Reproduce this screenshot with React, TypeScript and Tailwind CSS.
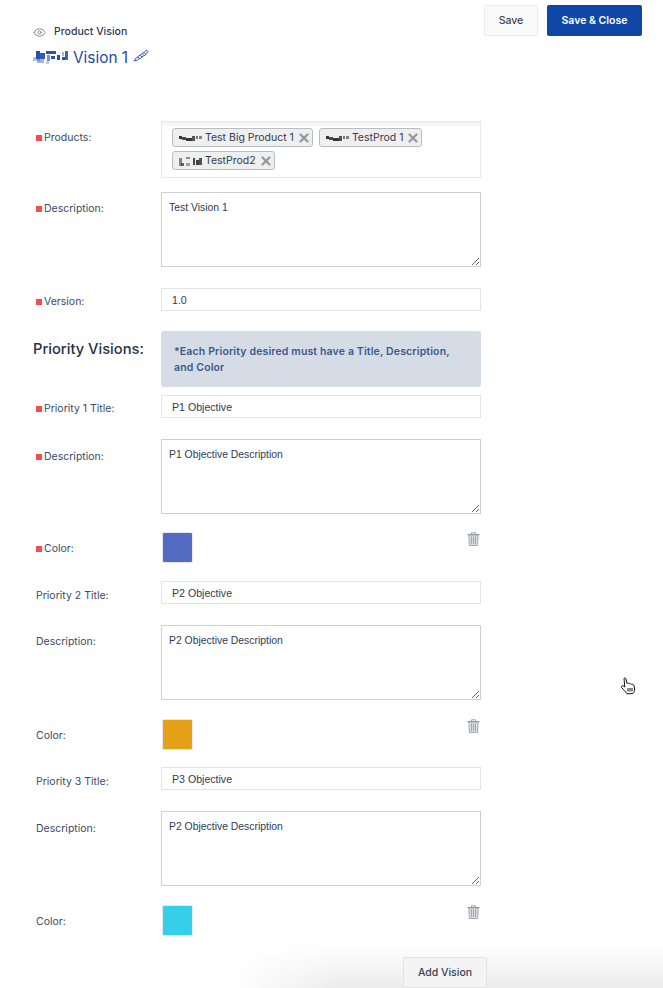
import React from "react";
import { Eye, X } from "lucide-react";

const Blocks = ({ cells, w, h, color, className }: { cells: number[][]; w: number; h: number; color: string; className?: string }) => (
  <svg width={w} height={h} viewBox={`0 0 ${w} ${h}`} className={className}>
    {cells.map(([x, y, cw, ch, o], i) => (
      <rect key={i} x={x} y={y} width={cw} height={ch} fill={color} opacity={o ?? 1} />
    ))}
  </svg>
);

const chipA = [[1,3,3,3,0.95],[4,4,4,3,0.85],[8,5,6,3,0.95],[14,3,3,5,0.8],[18,3,2,3,0.6],[21,3,3,3,0.55]];
const chipB = [[1,2,3,8,0.55],[3,7,3,3,0.7],[8,1,4,2,0.5],[8,7,4,3,0.4],[15,2,2,7,0.85],[18,4,3,5,0.9],[21,2,3,7,0.8]];
const titleBlocks = [
  [3,0,4,8,0.95],[7,2,5,6,0.9],[0,6,7,4,0.35],[4,8,7,4,0.4],[13,0,10,3,0.95],[14,4,3,6,0.6],[18,5,4,3,0.95],[13,10,3,3,0.3],
  [24,4,3,5,0.95],[29,6,3,3,0.95],[32,0,3,9,0.85],[29,1,2,4,0.4],
];

const Chip = ({ cells, label }: { cells: number[][]; label: string }) => (
  <span className="flex h-[19px] items-center rounded-[3px] border border-[#b9bcc2] bg-[#efefef] pl-[5px] pr-[1px] text-[10.5px] text-[#343b4d]">
    <Blocks cells={cells} w={24} h={10} color="#2a2a2e" className="mr-[3px]" />
    <span>{label}</span>
    <X size={14} strokeWidth={4} className="ml-[3px] text-[#97999e]" />
  </span>
);

const Label = ({ text, req, className = "" }: { text: string; req?: boolean; className?: string }) => (
  <div className={`flex w-[161px] shrink-0 items-center self-start pl-[36px] text-[10.5px] leading-[14px] text-[#3d4963] ${className}`}>
    {req && <span className="mr-[2px] h-[6px] w-[6px] bg-[#f54b4e]" />}
    <span>{text}</span>
  </div>
);

const TextInput = ({ value }: { value: string }) => (
  <input
    readOnly
    value={value}
    className="h-[23px] w-[320px] border border-[#e3e4e7] bg-white px-[10px] font-['Liberation_Sans',sans-serif] text-[10.6px] text-[#2f3a52] outline-none"
  />
);

const Area = ({ value }: { value: string }) => (
  <textarea
    readOnly
    defaultValue={value}
    className="block h-[75px] w-[320px] resize-y border border-[#cfd0d3] bg-white px-[7px] pb-[6px] pt-[8px] font-['Liberation_Sans',sans-serif] text-[10.4px] leading-[14px] text-[#2f3a52] outline-none"
  />
);

const Bin = () => (
  <svg width="13" height="14" viewBox="0 0 13 14" className="mr-[1px]" fill="none">
    <path d="M0.5 2.5 H12.5" stroke="#8f96a3" strokeWidth="1" />
    <path d="M4.5 2.2 V0.8 H8.5 V2.2" stroke="#8f96a3" strokeWidth="0.9" />
    <path d="M1.8 3 H11.2 L10.6 13.5 H2.4 Z" fill="#d9dce1" stroke="#9aa1ad" strokeWidth="0.9" />
    <path d="M4.5 4.5 V12 M6.5 4.5 V12 M8.5 4.5 V12" stroke="#9aa1ad" strokeWidth="0.9" />
  </svg>
);

const ColorRow = ({ color, req, className }: { color: string; req?: boolean; className: string }) => (
  <div className={`flex ${className}`}>
    <Label text="Color:" req={req} className="h-[33px]" />
    <div className="flex w-[320px] justify-between">
      <div className="ml-[1px] h-[31px] w-[31px] rounded-[2px] border border-[#e4e7f2]" style={{ backgroundColor: color }} />
      <Bin />
    </div>
  </div>
);

export default function App() {
  return (
    <div className="relative h-[988px] w-[663px] overflow-hidden bg-white font-['Inter',sans-serif]">
      <div className="pointer-events-none absolute bottom-0 left-[230px] right-0 h-[44px] bg-gradient-to-b from-white to-[#ececed] [mask-image:linear-gradient(to_right,transparent,black_25%)]" />

      <div className="relative flex justify-between pl-[33px] pr-[21px] pt-[5px]">
        <div className="pt-[20px]">
          <div className="flex h-[14px] items-center gap-[8px] text-[10.5px] font-medium text-[#2f3a52]">
            <Eye size={13} strokeWidth={1.5} className="text-[#6f7583]" />
            <span>Product Vision</span>
          </div>
          <div className="mt-[8px] flex h-[22px] items-center text-[15.4px] text-[#1b4ba5]">
            <Blocks cells={titleBlocks} w={35} h={14} color="#1b4ba5" className="mr-[5px] blur-[0.3px]" />
            <span>Vision 1</span>
            <svg width="16" height="13" viewBox="0 0 16 13" className="ml-[5px] mt-[-5px]" fill="none" stroke="#1b4ba5">
              <path d="M1 12 L3 9 L11 3.2 L13 5.4 L4.5 11 Z" strokeWidth="0.9" />
              <path d="M5 8 L6.5 9.8 M7.5 6.2 L9 8 M9.5 4.8 L11 6.5" strokeWidth="1" />
              <path d="M11.5 2.6 L13.6 1.2 L15 2.6 L13.4 4.6" strokeWidth="1" />
            </svg>
          </div>
        </div>
        <div className="flex gap-[9px]">
          <button className="h-[31px] w-[54px] rounded-[2px] border border-[#ececee] bg-[#fafafa] text-[10.5px] font-medium text-[#3a4256]">Save</button>
          <button className="h-[31px] w-[95px] rounded-[2px] bg-[#0f47a6] text-[10.5px] font-semibold text-white">Save &amp; Close</button>
        </div>
      </div>

      <div className="relative mt-[52px] flex">
        <Label text="Products:" req className="h-[34px]" />
        <div className="h-[57px] w-[320px] border border-[#e8e9eb] bg-gradient-to-b from-[#f1f1f2] from-0% to-white to-[10%] pl-[10px] pt-[6px]">
          <div className="flex flex-wrap gap-x-[6px] gap-y-[4px]">
            <Chip cells={chipA} label="Test Big Product 1" />
            <Chip cells={chipA} label="TestProd 1" />
            <Chip cells={chipB} label="TestProd2" />
          </div>
        </div>
      </div>

      <div className="relative mt-[14px] flex">
        <Label text="Description:" req className="h-[33px]" />
        <Area value="Test Vision 1" />
      </div>

      <div className="relative mt-[21px] flex h-[23px]">
        <Label text="Version:" req className="h-[28px]" />
        <TextInput value="1.0" />
      </div>

      <div className="relative mt-[20px] flex">
        <div className="w-[161px] shrink-0 pl-[33px] pt-[9px] text-[14.7px] font-medium leading-[18px] text-[#24304a]">Priority Visions:</div>
        <div className="h-[56px] w-[320px] rounded-[3px] bg-[#d6dce6] px-[13px] pt-[13px] text-[10.5px] font-semibold leading-[15.5px] tracking-[0.15px] text-[#3a5a8c]">
          *Each Priority desired must have a Title, Description, and Color
        </div>
      </div>

      <div className="relative mt-[8px] flex h-[23px]">
        <Label text="Priority 1 Title:" req className="h-[28px]" />
        <TextInput value="P1 Objective" />
      </div>
      <div className="relative mt-[21px] flex">
        <Label text="Description:" req className="h-[35px]" />
        <Area value="P1 Objective Description" />
      </div>
      <ColorRow color="#546bc4" req className="relative mt-[18px] h-[31px]" />

      <div className="relative mt-[18px] flex h-[23px]">
        <Label text="Priority 2 Title:" className="h-[29px]" />
        <TextInput value="P2 Objective" />
      </div>
      <div className="relative mt-[21px] flex">
        <Label text="Description:" className="h-[33px]" />
        <Area value="P2 Objective Description" />
      </div>
      <ColorRow color="#e5a117" className="relative mt-[19px] h-[31px]" />

      <div className="relative mt-[17px] flex h-[23px]">
        <Label text="Priority 3 Title:" className="h-[29px]" />
        <TextInput value="P3 Objective" />
      </div>
      <div className="relative mt-[21px] flex">
        <Label text="Description:" className="h-[35px]" />
        <Area value="P2 Objective Description" />
      </div>
      <ColorRow color="#35cfe9" className="relative mt-[19px] h-[31px]" />

      <div className="relative mt-[21px] flex justify-end pr-[176px]">
        <button className="h-[31px] w-[84px] rounded-[2px] border border-[#e3e3e6] bg-[#f4f4f5] text-[10.5px] font-medium text-[#3a4256]">Add Vision</button>
      </div>

      <svg width="16" height="18" viewBox="0 0 16 18" className="absolute left-[620px] top-[677px]" stroke="#111" strokeWidth="1" fill="#fff" strokeLinejoin="round">
        <path d="M4 1.5 C4.8 0.6 5.8 1 6 2 L7 6.5 C7.8 6 8.8 6 9.2 6.8 C10 6.4 11 6.5 11.4 7.3 C12.3 7 13.6 7.4 14 8.5 L14.6 12 C14.8 14 14 15.6 13 16.5 L7 16.8 C6 15 3.5 12.5 1.6 10.6 C0.8 9.5 2 8.2 3.2 8.8 L4.8 10 Z" />
        <path d="M8 11 V14.5 M10 11 V14.5 M12 11 V14.5" fill="none" />
      </svg>
    </div>
  );
}
